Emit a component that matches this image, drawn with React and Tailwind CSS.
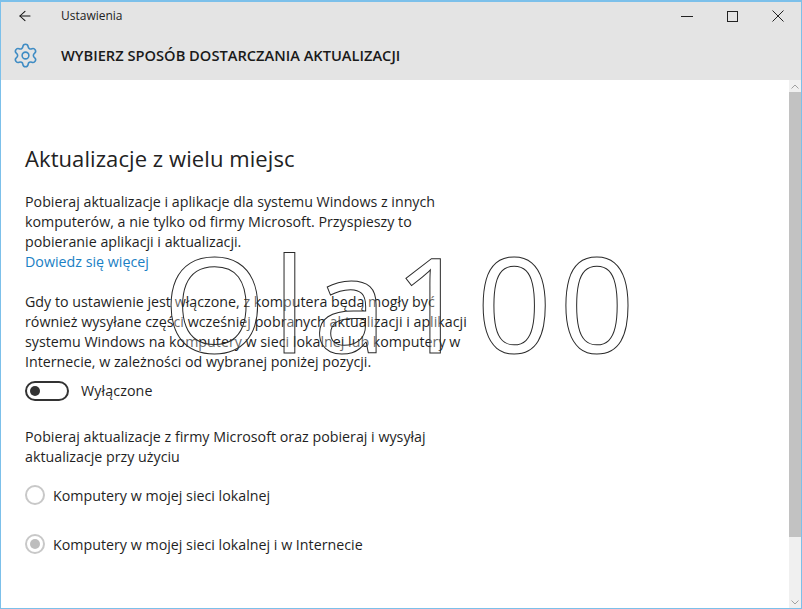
import React from "react";
import { ArrowLeft, Settings } from "lucide-react";

const lineClass = "whitespace-nowrap h-5 leading-5";

export default function App() {
  return (
    <div className="relative w-[802px] h-[609px] overflow-hidden bg-white border border-[#7cc0ea] border-t-2 flex flex-col text-[#1f1f1f] font-['Open_Sans','Noto_Sans',sans-serif]">
      <header className="bg-[#e4e4e4] h-[78px] shrink-0 flex flex-col">
        <div className="h-[28px] flex items-center">
          <div className="w-[47px] pl-[16px]">
            <ArrowLeft size={16} strokeWidth={1.4} className="text-[#111] scale-x-110" />
          </div>
          <span className="ml-[13px] text-[12px] text-[#222]">Ustawienia</span>
          <div className="ml-auto flex items-center gap-[34px] pr-[17px]">
            <div className="w-[12px] h-[1px] bg-[#222]" />
            <div className="w-[11px] h-[11px] border border-[#222]" />
            <svg width="12" height="12" viewBox="0 0 12 12" className="text-[#222]">
              <path d="M0.5 0.5 11.5 11.5M11.5 0.5 0.5 11.5" stroke="currentColor" strokeWidth="1" fill="none" />
            </svg>
          </div>
        </div>
        <div className="flex items-center h-[50px]">
          <Settings size={27} strokeWidth={1.4} className="ml-[11px] text-[#3f8cc4]" />
          <h1 className="ml-[22px] text-[14.67px] font-semibold text-[#1a1a1a] whitespace-nowrap">WYBIERZ SPOSÓB DOSTARCZANIA AKTUALIZACJI</h1>
        </div>
      </header>

      <div className="flex-1 flex min-h-0">
        <main className="flex-1 pl-[24px] pt-[63px] text-[14.25px]">
          <h2 className="text-[22px] leading-[30px] font-normal tracking-[0.08px] text-[#222] whitespace-nowrap">Aktualizacje z wielu miejsc</h2>
          <div className="mt-[19px]">
            <p className={lineClass}>Pobieraj aktualizacje i aplikacje dla systemu Windows z innych</p>
            <p className={lineClass}>komputerów, a nie tylko od firmy Microsoft. Przyspieszy to</p>
            <p className={lineClass}>pobieranie aplikacji i aktualizacji.</p>
            <a className={`block text-[#1a80c4] ${lineClass}`}>Dowiedz się więcej</a>
          </div>
          <div className="mt-[20px]">
            <p className={lineClass}>Gdy to ustawienie jest włączone, z komputera będą mogły być</p>
            <p className={lineClass}>również wysyłane części wcześniej pobranych aktualizacji i aplikacji</p>
            <p className={lineClass}>systemu Windows na komputery w sieci lokalnej lub komputery w</p>
            <p className={lineClass}>Internecie, w zależności od wybranej poniżej pozycji.</p>
          </div>
          <div className="flex items-center mt-[9px] h-[20px]">
            <div className="w-[44px] h-[20px] rounded-full border-2 border-[#333] flex items-center pl-[3px]">
              <div className="w-[10px] h-[10px] rounded-full bg-[#333]" />
            </div>
            <span className="ml-[12px] tracking-[0.1px]">Wyłączone</span>
          </div>
          <div className="mt-[26px]">
            <p className={lineClass}>Pobieraj aktualizacje z firmy Microsoft oraz pobieraj i wysyłaj</p>
            <p className={lineClass}>aktualizacje przy użyciu</p>
          </div>
          <div className="flex items-center mt-[18px] h-[20px]">
            <div className="w-[20px] h-[20px] rounded-full border-2 border-[#c8c8c8]" />
            <span className="ml-[8px] pt-px">Komputery w mojej sieci lokalnej</span>
          </div>
          <div className="flex items-center mt-[29px] h-[20px]">
            <div className="w-[20px] h-[20px] rounded-full border-2 border-[#c8c8c8] flex items-center justify-center">
              <div className="w-[10px] h-[10px] rounded-full bg-[#bdbdbd]" />
            </div>
            <span className="ml-[8px] pt-px">Komputery w mojej sieci lokalnej i w Internecie</span>
          </div>
        </main>

        <aside className="w-[12px] shrink-0 bg-[#f0f0f0] flex flex-col">
          <div className="h-[12px] flex items-center justify-center">
            <svg width="8" height="5" viewBox="0 0 8 5"><path d="M0.5 4.5 4 1 7.5 4.5" stroke="#a0a0a0" fill="none" /></svg>
          </div>
          <div className="h-[445px] bg-[#c2c2c2]" />
          <div className="mt-auto h-[12px] flex items-center justify-center">
            <svg width="8" height="5" viewBox="0 0 8 5"><path d="M0.5 0.5 4 4 7.5 0.5" stroke="#a0a0a0" fill="none" /></svg>
          </div>
        </aside>
      </div>

      <div className="absolute left-[162px] top-[205px] text-[132px] leading-[190px] font-['Open_Sans',sans-serif] font-normal tracking-[7.2px] whitespace-nowrap text-white/30 [-webkit-text-stroke:1px_#2a2a2a] pointer-events-none">Ola100</div>
    </div>
  );
}
